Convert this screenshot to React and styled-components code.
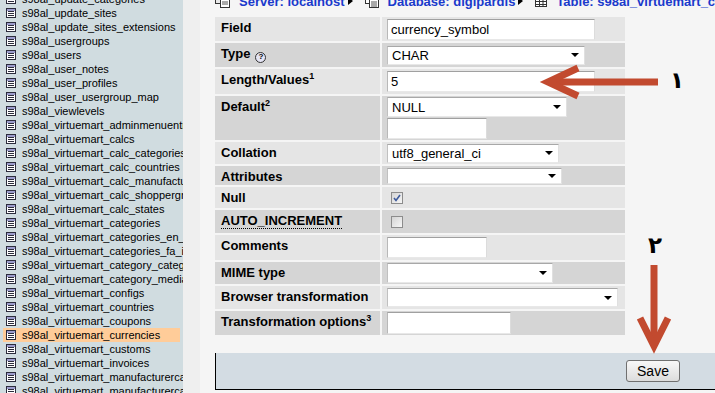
import React from 'react'
import styled, { createGlobalStyle } from 'styled-components'

const GlobalStyle = createGlobalStyle`
  html, body {
    margin: 0;
    padding: 0;
  }
  body {
    width: 715px;
    height: 393px;
    overflow: hidden;
    background: #f5f5f5;
    font-family: "Liberation Sans", Arial, sans-serif;
  }
`

const tables = [
  'update_categories', 'update_sites', 'update_sites_extensions', 'usergroups', 'users',
  'user_notes', 'user_profiles', 'user_usergroup_map', 'viewlevels',
  'virtuemart_adminmenuentries', 'virtuemart_calcs', 'virtuemart_calc_categories',
  'virtuemart_calc_countries', 'virtuemart_calc_manufacturers', 'virtuemart_calc_shoppergroups',
  'virtuemart_calc_states', 'virtuemart_categories', 'virtuemart_categories_en_gb',
  'virtuemart_categories_fa_ir', 'virtuemart_category_categories', 'virtuemart_category_medias',
  'virtuemart_configs', 'virtuemart_countries', 'virtuemart_coupons', 'virtuemart_currencies',
  'virtuemart_customs', 'virtuemart_invoices', 'virtuemart_manufacturercategories',
  'virtuemart_manufacturercategories_en_gb',
]

const Page = styled.div`
  position: relative;
  display: flex;
  width: 715px;
  height: 393px;
  overflow: hidden;
`

const Sidebar = styled.div`
  width: 183px;
  flex: none;
  background: #d0dce0;
  overflow: hidden;
`

const TableList = styled.ul`
  list-style: none;
  margin: -8px 0 0;
  padding: 0 0 0 3px;
`

const TableItem = styled.li`
  display: flex;
  align-items: center;
  gap: 6px;
  width: 174px;
  height: 14px;
  padding-left: 3px;
  background: ${p => (p.$active ? '#ffcc99' : 'transparent')};
  font-size: 11px;
  color: #000;
  white-space: nowrap;

  svg,
  span {
    flex: none;
  }
`

const Splitter = styled.div`
  width: 17px;
  flex: none;
  background: #efefef;
`

const Main = styled.div`
  flex: 1;
  padding-left: 13px;
  background: #f5f5f5;
`

const Breadcrumb = styled.div`
  display: flex;
  align-items: center;
  height: 16px;
  margin: -7px 0 0 2px;
  white-space: nowrap;
  font-size: 13px;
  font-weight: bold;
  color: #1a3acc;

  svg {
    flex: none;
  }
`

const Crumb = styled.span`
  display: flex;
  align-items: center;
  gap: 9px;
`

const CrumbSep = styled.span`
  flex: none;
  width: 0;
  height: 0;
  margin: 0 12px 0 3px;
  border-top: 4px solid transparent;
  border-bottom: 4px solid transparent;
  border-left: 5px solid #000;
`

const FieldTable = styled.table`
  border-collapse: separate;
  border-spacing: 2px;
  margin-top: 6px;
`

const Row = styled.tr`
  height: ${p => p.$h}px;
`

const Label = styled.td`
  width: 159px;
  padding: 3px 0 0 6px;
  vertical-align: top;
  background: ${p => (p.$dark ? '#d5d5d5' : '#e5e5e5')};
  font-size: 13px;
  line-height: 15px;
  font-weight: bold;
  color: #000;

  sup {
    font-size: 9px;
    line-height: 0;
    vertical-align: 5px;
  }
`

const Value = styled.td`
  width: 238px;
  padding: 0 0 0 5px;
  vertical-align: middle;
  background: ${p => (p.$dark ? '#d5d5d5' : '#e5e5e5')};
`

const Stack = styled.div`
  display: flex;
  flex-direction: column;
  gap: 1px;
`

const TextInput = styled.input`
  display: block;
  box-sizing: border-box;
  width: ${p => p.$w}px;
  height: ${p => p.$h}px;
  margin: 0;
  padding: 0 3px;
  border: 1px solid;
  border-color: #a0a0a0 #dcdcdc #e8e8e8 #b8b8b8;
  background: #fff;
  font-family: "Liberation Sans", Arial, sans-serif;
  font-size: 13px;
  color: #000;
  outline: none;
`

const SelectBox = styled.div`
  display: flex;
  align-items: center;
  box-sizing: border-box;
  width: ${p => p.$w}px;
  height: ${p => p.$h}px;
  padding: 0 5px 0 4px;
  border: 1px solid;
  border-color: #a8a8a8 #e0e0e0 #e8e8e8 #c0c0c0;
  background: #fff;
  font-size: 13px;
  color: #000;

  &::after {
    content: '';
    margin-left: auto;
    width: 0;
    height: 0;
    border-left: 4px solid transparent;
    border-right: 4px solid transparent;
    border-top: 4px solid #000;
  }
`

const Check = styled.span`
  display: flex;
  align-items: center;
  justify-content: center;
  box-sizing: border-box;
  width: 12px;
  height: 12px;
  margin-left: 4px;
  border: 1px solid #8c8c8c;
  background: linear-gradient(135deg, #d4d4d4, #f6f6f6);
`

const Help = styled.span`
  display: inline-flex;
  align-items: center;
  justify-content: center;
  box-sizing: border-box;
  width: 11px;
  height: 11px;
  margin-left: 5px;
  border: 1px solid #333;
  border-radius: 50%;
  background: #e4e4f4;
  font-size: 8px;
  line-height: 1;
  vertical-align: -1px;
`

const Abbr = styled.span`
  border-bottom: 1px dotted #000;
`

const Footer = styled.div`
  box-sizing: border-box;
  height: 37px;
  margin: 16px 0 0 2px;
  padding: 7px 0 0 410px;
  background: #d3dce3;
  border-left: 1px solid #000;
  border-bottom: 1px solid #000;
`

const SaveButton = styled.button`
  width: 54px;
  height: 22px;
  padding: 0;
  border: 1px solid #707070;
  border-radius: 3px;
  background: linear-gradient(#f8f8f8, #dcdcdc);
  font-family: "Liberation Sans", Arial, sans-serif;
  font-size: 14px;
  color: #000;
`

const Marks = styled.svg`
  position: absolute;
  left: 0;
  top: 0;
  pointer-events: none;
`

const Digit = styled.span`
  position: absolute;
  left: ${p => p.$x}px;
  top: ${p => p.$y}px;
  font-family: "DejaVu Sans", sans-serif;
  font-size: 23px;
  font-weight: bold;
  line-height: 1;
  color: #000;
`

const TableIcon = () => (
  <svg width="10" height="10" viewBox="0 0 10 10">
    <rect x="0.5" y="0.5" width="9" height="9" fill="#fff" stroke="#2c2c3c" />
    <rect x="1" y="1" width="8" height="2" fill="#9c9ccc" />
    <path d="M2 3.5h6M2 5.5h6M2 7.5h6" stroke="#2c2c3c" />
  </svg>
)

const ServerIcon = () => (
  <svg width="15" height="14" viewBox="0 0 15 14">
    <rect x="0.5" y="2.5" width="9" height="7" fill="#e8e8e8" stroke="#333" />
    <rect x="5.5" y="5.5" width="9" height="8" fill="#fff" stroke="#333" />
    <path d="M7 8h6M7 10h6" stroke="#555" />
  </svg>
)

const DbIcon = () => (
  <svg width="14" height="14" viewBox="0 0 14 14">
    <rect x="0.5" y="1.5" width="8" height="8" fill="#fff" stroke="#333" />
    <rect x="4.5" y="5.5" width="9" height="8" fill="#fff" stroke="#333" />
    <path d="M6 8h6M6 10h6M6 12h6" stroke="#555" />
  </svg>
)

const GridIcon = () => (
  <svg width="12" height="12" viewBox="0 0 12 12">
    <rect x="0.5" y="0.5" width="11" height="11" fill="#fff" stroke="#333" />
    <path d="M0.5 3.5h11M0.5 6.5h11M0.5 9.5h11M4.5 0.5v11M8 0.5v11" stroke="#333" />
  </svg>
)

const CheckMark = () => (
  <svg width="8" height="8" viewBox="0 0 8 8">
    <path d="M1 4l2 2.5L7 1" fill="none" stroke="#3d5a9c" strokeWidth="1.6" />
  </svg>
)

const rows = [
  { label: 'Field', h: 24, control: <TextInput $w={208} $h={21} defaultValue="currency_symbol" readOnly /> },
  { label: 'Type', help: true, h: 24, control: <SelectBox $w={198} $h={19}>CHAR</SelectBox> },
  { label: 'Length/Values', sup: '1', h: 25, control: <TextInput $w={208} $h={21} defaultValue="5" readOnly /> },
  {
    label: 'Default', sup: '2', h: 44,
    control: (
      <Stack>
        <SelectBox $w={180} $h={20}>NULL</SelectBox>
        <TextInput $w={100} $h={21} readOnly />
      </Stack>
    ),
  },
  { label: 'Collation', h: 22, control: <SelectBox $w={172} $h={19}>utf8_general_ci</SelectBox> },
  { label: 'Attributes', h: 19, control: <SelectBox $w={175} $h={16} /> },
  { label: 'Null', h: 21, control: <Check><CheckMark /></Check> },
  { label: 'AUTO_INCREMENT', abbr: true, h: 23, control: <Check /> },
  { label: 'Comments', h: 25, control: <TextInput $w={100} $h={21} readOnly /> },
  { label: 'MIME type', h: 22, control: <SelectBox $w={166} $h={20} /> },
  { label: 'Browser transformation', h: 23, control: <SelectBox $w={231} $h={19} /> },
  { label: 'Transformation options', sup: '3', h: 24, control: <TextInput $w={124} $h={22} readOnly /> },
]

const App = () => {
  return (
    <Page>
      <GlobalStyle />
      <Sidebar>
        <TableList>
          {tables.map(t => (
            <TableItem key={t} $active={t === 'virtuemart_currencies'}>
              <TableIcon />
              <span>s98al_{t}</span>
            </TableItem>
          ))}
        </TableList>
      </Sidebar>
      <Splitter />
      <Main>
        <Breadcrumb>
          <Crumb><ServerIcon />Server: localhost</Crumb>
          <CrumbSep />
          <Crumb><DbIcon />Database: digipardis</Crumb>
          <CrumbSep />
          <Crumb><GridIcon />Table: s98al_virtuemart_currencies</Crumb>
        </Breadcrumb>

        <FieldTable>
          <tbody>
            {rows.map((r, i) => (
              <Row key={r.label} $h={r.h}>
                <Label $dark={i % 2 === 1}>
                  {r.abbr ? <Abbr>{r.label}</Abbr> : r.label}
                  {r.sup && <sup>{r.sup}</sup>}
                  {r.help && <Help>?</Help>}
                </Label>
                <Value $dark={i % 2 === 1}>{r.control}</Value>
              </Row>
            ))}
          </tbody>
        </FieldTable>

        <Footer>
          <SaveButton>Save</SaveButton>
        </Footer>
      </Main>

      <Marks width="715" height="393" viewBox="0 0 715 393">
        <g fill="none" stroke="#c24a2f" strokeWidth="7" strokeMiterlimit="10">
          <path d="M658 82H552" />
          <polyline points="578,68 548,82 578,96" />
          <path d="M654 265V342" />
          <polyline points="640,318 654,346 668,318" />
        </g>
      </Marks>
      <Digit $x={670} $y={69}>۱</Digit>
      <Digit $x={648} $y={234}>۲</Digit>
    </Page>
  )
}

export default App
